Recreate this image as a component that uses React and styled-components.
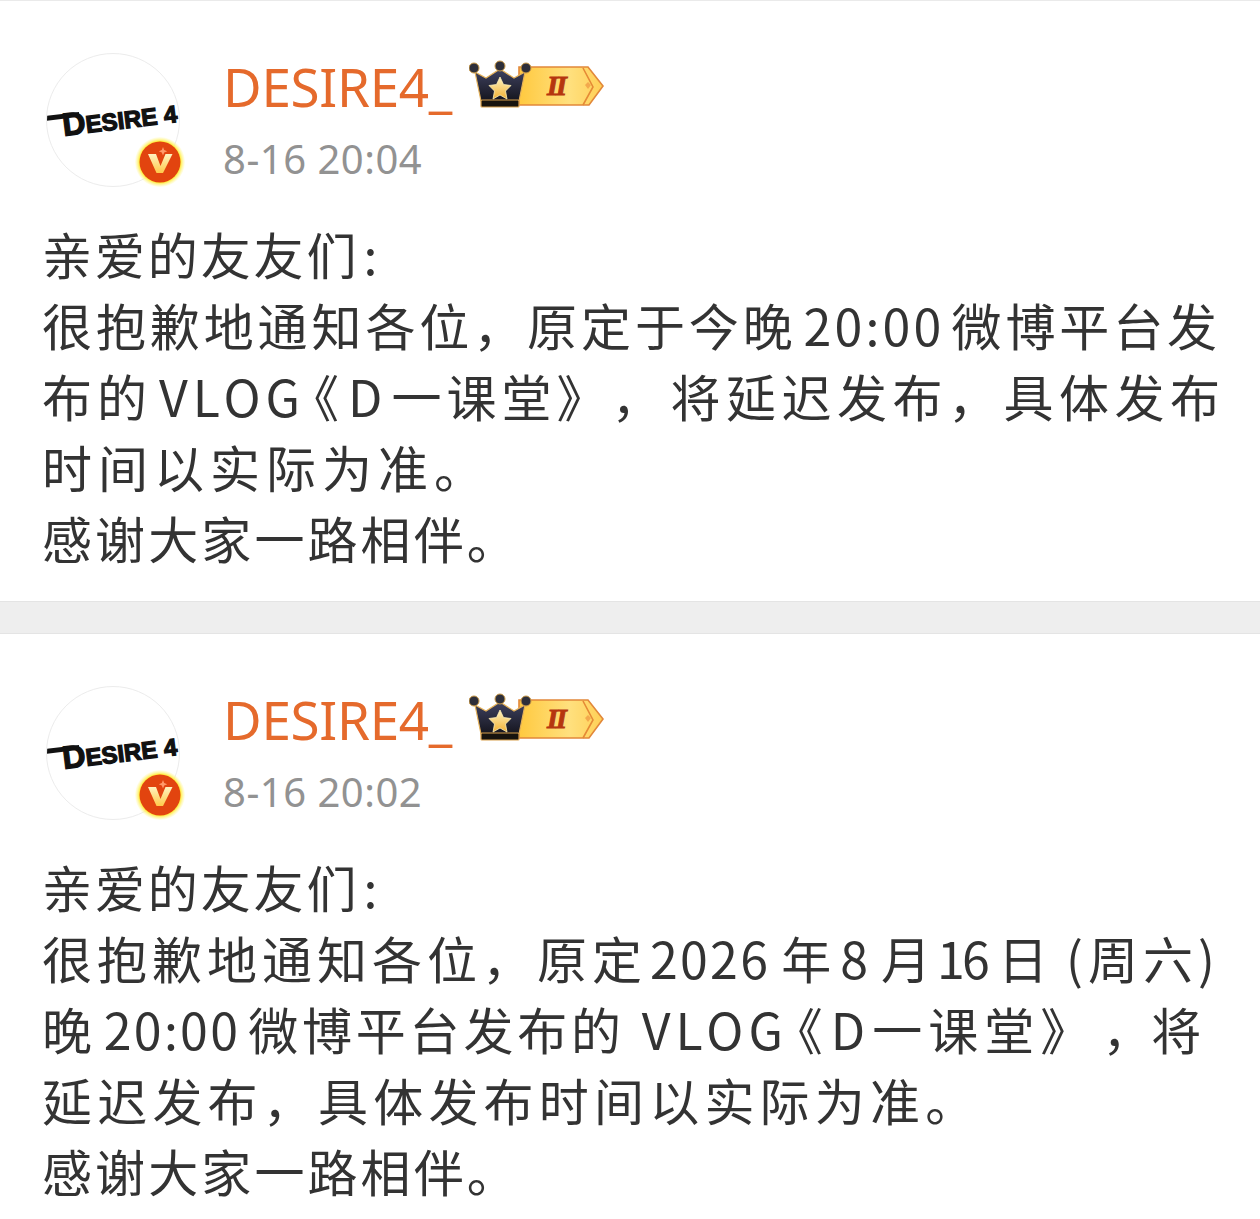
import React from "react";
import styled, { createGlobalStyle } from "styled-components";

const Global = createGlobalStyle`
  html, body { margin: 0; padding: 0; background: #fff; }
  body { font-family: "Noto Sans CJK SC", "Noto Sans", sans-serif; }
`;

const Page = styled.div`
  width: 1260px;
  height: 1219px;
  overflow: hidden;
  background: #fff;
  border-top: 1px solid #eaeaea;
  box-sizing: border-box;
`;

const Post = styled.section`
  height: ${(p) => p.$h}px;
  padding: 51px 0 0 43px;
  box-sizing: border-box;
`;

const Divider = styled.div`
  height: 31px;
  background: #eeeeee;
  border-top: 1px solid #e4e4e4;
  border-bottom: 1px solid #e4e4e4;
`;

const Head = styled.header`
  display: flex;
  height: 136px;
`;

const AvatarWrap = styled.div`
  position: relative;
  width: 134px;
  height: 134px;
  margin: 1px 0 0 3px;
  flex: none;
`;

const Avatar = styled.div`
  width: 134px;
  height: 134px;
  box-sizing: border-box;
  border-radius: 50%;
  border: 1px solid #ececec;
  display: flex;
  align-items: center;
  justify-content: center;
  overflow: hidden;
`;

const LogoText = styled.div`
  position: relative;
  transform: rotate(-7deg);
  margin: -5px 0 0 13px;
  font-family: "Liberation Sans", sans-serif;
  font-weight: 700;
  font-size: 24px;
  line-height: 1;
  color: #111;
  white-space: nowrap;
  -webkit-text-stroke: 1.3px #111;

  &::before {
    content: "";
    position: absolute;
    left: -16px;
    top: 5px;
    width: 34px;
    height: 5px;
    background: #111;
  }
`;

const BigD = styled.span`
  font-size: 32px;
`;

const Badge = styled.svg`
  position: absolute;
  right: -5px;
  bottom: 0;
  width: 50px;
  height: 50px;
`;

const Meta = styled.div`
  margin-left: 43px;
  display: flex;
  flex-direction: column;
`;

const NameRow = styled.div`
  display: flex;
  align-items: flex-start;
  height: 70px;
`;

const Name = styled.span`
  font-family: "Noto Sans", "Noto Sans CJK SC", sans-serif;
  font-size: 53px;
  font-weight: 400;
  line-height: 70px;
  letter-spacing: -0.3px;
  color: #e56a2c;
`;

const Crown = styled.svg`
  width: 136px;
  height: 50px;
  margin: 8px 0 0 17px;
  flex: none;
`;

const Time = styled.div`
  font-family: "Noto Sans", sans-serif;
  font-size: 40px;
  line-height: 52px;
  letter-spacing: 0.5px;
  color: #929292;
  margin-top: 11px;
`;

const Body = styled.div`
  margin: 30px 0 0 -1px;
  font-size: 50px;
  line-height: 71px;
  color: #333;
  font-weight: 400;
`;

const Line = styled.div`
  white-space: nowrap;
  letter-spacing: ${(p) => p.$sp}px;
  height: 71px;
  text-spacing-trim: space-all;
`;

// a stretch of a line with its own tracking and side gaps
const Run = styled.span`
  margin-left: ${(p) => p.$l || 0}px;
  margin-right: ${(p) => p.$r || 0}px;
  ${(p) => (p.$sp !== undefined ? `letter-spacing: ${p.$sp}px;` : "")}
`;

// title bracket without the empty half of its em box
const Bracket = styled(Run)`
  font-feature-settings: "halt";
`;

function VBadge() {
  return (
    <Badge viewBox="0 0 50 50">
      <defs>
        <radialGradient id="glow">
          <stop offset="0.82" stopColor="#ffec36" />
          <stop offset="1" stopColor="#fff8a0" stopOpacity="0.15" />
        </radialGradient>
        <linearGradient id="vee" x1="0" y1="0" x2="0" y2="1">
          <stop offset="0" stopColor="#fff2c0" />
          <stop offset="1" stopColor="#ffc94a" />
        </linearGradient>
      </defs>
      <circle cx="25" cy="25" r="25" fill="url(#glow)" />
      <circle cx="25" cy="25" r="20.5" fill="#e2440f" />
      <path d="M13 17 h8 l4.5 12 l5 -12 h7 l-9.5 19 h-6.5 z" fill="url(#vee)" />
      <path d="M28 10 l1.2 3 l3 1.2 l-3 1.2 l-1.2 3 l-1.2 -3 l-3 -1.2 l3 -1.2 z" fill="#ff9a6a" />
    </Badge>
  );
}

function LevelCrown() {
  return (
    <Crown viewBox="0 0 136 50">
      <defs>
        <linearGradient id="gold" x1="0" y1="0" x2="1" y2="0">
          <stop offset="0" stopColor="#ffc93f" />
          <stop offset="0.6" stopColor="#ffe07e" />
          <stop offset="1" stopColor="#ffcf55" />
        </linearGradient>
        <linearGradient id="dark" x1="0" y1="0" x2="0" y2="1">
          <stop offset="0" stopColor="#3f4260" />
          <stop offset="1" stopColor="#15151e" />
        </linearGradient>
        <linearGradient id="starFill" x1="0" y1="0" x2="0" y2="1">
          <stop offset="0" stopColor="#fff3c0" />
          <stop offset="1" stopColor="#f2b134" />
        </linearGradient>
      </defs>
      <path d="M50 7 H119 L134 26 L120 45 H50 Z" fill="url(#gold)" stroke="#e2883a" strokeWidth="1.6" />
      <path d="M114 8 L124 27 L114 45" fill="none" stroke="#e58a35" strokeWidth="1.6" />
      <path d="M119 22 L122 25 L119 29 L116 25 Z" fill="#f3a94d" />
      <path d="M6 12 L17 18 L31 9 L45 18 L56 12 L50 41 H12 Z" fill="url(#dark)" stroke="#e5b25a" strokeWidth="1.2" />
      <rect x="12" y="40" width="38" height="7" rx="1" fill="#17130e" stroke="#d8a04c" strokeWidth="1.2" />
      <circle cx="5" cy="8" r="5" fill="#2e2f3a" stroke="#c99a4a" />
      <circle cx="31" cy="6" r="5" fill="#2e2f3a" stroke="#c99a4a" />
      <circle cx="57" cy="8" r="5" fill="#2e2f3a" stroke="#c99a4a" />
      <path d="M31 17 L34.5 24.5 L42 25.5 L36.5 31 L38 39 L31 35 L24 39 L25.5 31 L20 25.5 L27.5 24.5 Z" fill="url(#starFill)" stroke="#fff0b8" strokeWidth="0.8" strokeLinejoin="round" />
      <text x="87" y="35" textAnchor="middle" fontFamily="'Liberation Serif', serif" fontWeight="700" fontStyle="italic" fontSize="28" letterSpacing="-2" stroke="#b5360f" strokeWidth="0.9" fill="#b5360f">II</text>
    </Crown>
  );
}

function PostCard({ h, time, lines }) {
  return (
    <Post $h={h}>
      <Head>
        <AvatarWrap>
          <Avatar>
            <LogoText><BigD>D</BigD>ESIRE 4</LogoText>
          </Avatar>
          <VBadge />
        </AvatarWrap>
        <Meta>
          <NameRow>
            <Name>DESIRE4_</Name>
            <LevelCrown />
          </NameRow>
          <Time>{time}</Time>
        </Meta>
      </Head>
      <Body>
        {lines.map((l, i) => (
          <Line key={i} $sp={l.sp}>{l.text}</Line>
        ))}
      </Body>
    </Post>
  );
}

const greeting = { sp: 2.9, text: <>亲爱的友友们<Run $l={4}>:</Run></> };
const thanks = { sp: 3.1, text: "感谢大家一路相伴。" };

const firstLines = [
  greeting,
  { sp: 3.9, text: <>很抱歉地通知各位，原定于今晚<Run $l={7} $r={7} $sp={3.2}>20:00</Run>微博平台发</> },
  {
    sp: 5,
    text: (
      <>
        布的<Run $l={7} $sp={5}>VLOG</Run>
        <Bracket $l={9} $r={4}>《</Bracket>
        <Run $r={2} $sp={2}>D</Run>
        <Run $l={5}>一课堂》，</Run>
        <Run $l={4} $sp={5.5}>将延迟发布，具体发布</Run>
      </>
    ),
  },
  { sp: 6, text: "时间以实际为准。" },
  thanks,
];

const secondLines = [
  greeting,
  {
    sp: 5,
    text: (
      <>
        很抱歉地通知各位，原定
        <Run $l={3} $r={11} $sp={2.3}>2026</Run>年
        <Run $l={4} $r={13} $sp={0}>8</Run>月
        <Run $l={1} $r={11} $sp={-2.7}>16</Run>日
        <Run $l={13}>(周六)</Run>
      </>
    ),
  },
  {
    sp: 3.8,
    text: (
      <>
        晚<Run $l={8} $r={8} $sp={2.3}>20:00</Run>微博平台发布的
        <Run $l={17} $sp={5}>VLOG</Run>
        <Bracket $l={10} $r={3} $sp={5}>《</Bracket>
        <Run $r={2} $sp={2}>D</Run>
        <Run $l={3} $sp={6}>一课堂》</Run>
        <Run $l={6} $sp={-1}>，</Run>
        <Run $sp={5}>将</Run>
      </>
    ),
  },
  { sp: 5.2, text: "延迟发布，具体发布时间以实际为准。" },
  thanks,
];

export default function App() {
  return (
    <Page>
      <Global />
      <PostCard h={600} time="8-16 20:04" lines={firstLines} />
      <Divider />
      <PostCard h={590} time="8-16 20:02" lines={secondLines} />
    </Page>
  );
}
